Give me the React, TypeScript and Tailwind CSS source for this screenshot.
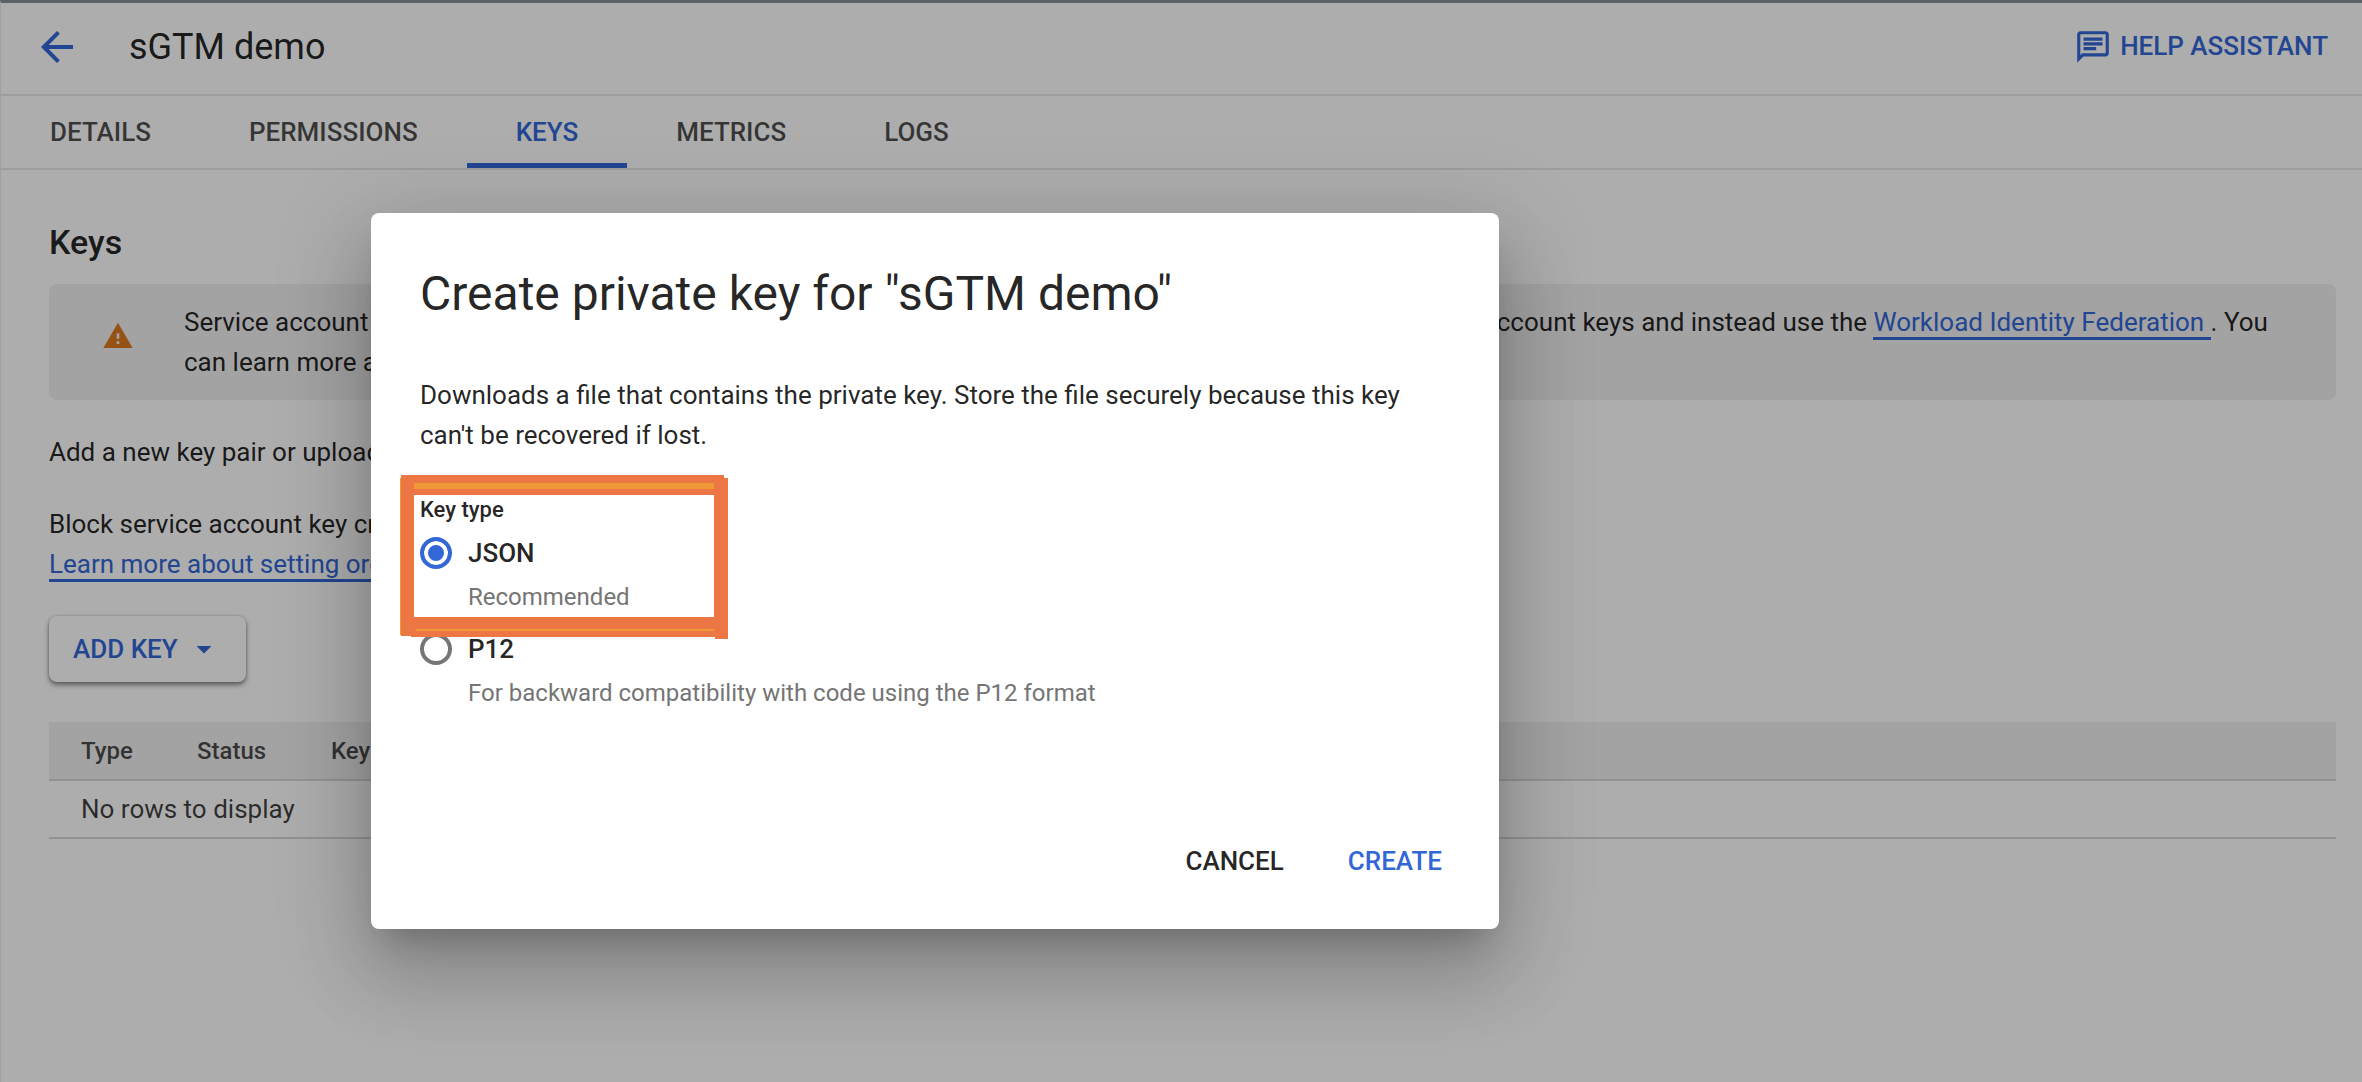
import React from "react";
import { clsx } from "clsx";
import { MdArrowBack, MdArrowDropDown, MdOutlineChat, MdWarning } from "react-icons/md";

const tabs = [
  { title: "DETAILS", href: "#details" },
  { title: "PERMISSIONS", href: "#permissions" },
  { title: "KEYS", href: "#keys", active: true },
  { title: "METRICS", href: "#metrics" },
  { title: "LOGS", href: "#logs" },
];

const keyTypes = [
  { id: "json", label: "JSON", hint: "Recommended" },
  {
    id: "p12",
    label: "P12",
    hint: "For backward compatibility with code using the P12 format",
  },
];

function Header() {
  return (
    <header className="flex h-[93px] items-center justify-between border-b-2 border-[#e6e6e6] pb-1 pl-8 pr-[34px]">
      <div className="flex items-center gap-12">
        <a href="#back" aria-label="Back" className="text-[#3367d6]">
          <MdArrowBack className="size-12" />
        </a>
        <h1 className="text-[36px] leading-10">sGTM demo</h1>
      </div>
      <button type="button" className="flex items-center gap-2 text-[26px] font-medium text-[#3367d6]">
        <MdOutlineChat className="size-[38px]" />
        HELP ASSISTANT
      </button>
    </header>
  );
}

function Tabs() {
  return (
    <nav className="flex h-[74px] border-b-2 border-[#e6e6e6]">
      {tabs.map((tab) => (
        <a
          key={tab.title}
          href={tab.href}
          className={clsx(
            "flex items-center border-b-[5px] px-[49px] pt-[6px] text-[26px] font-medium",
            tab.active ? "border-[#3367d6] text-[#3367d6]" : "border-transparent text-black/70"
          )}
        >
          {tab.title}
        </a>
      ))}
    </nav>
  );
}

function KeysPage() {
  return (
    <main className="flex flex-col pb-20 pl-12 pr-[26px] pt-[52px] text-[26px] leading-10">
      <h2 className="text-[34px] font-medium">Keys</h2>

      <div className="mt-[22px] flex gap-[50px] rounded-lg bg-[#f0f0f0] py-[18px] pl-[53px] pr-14">
        <MdWarning className="mt-[18px] size-8 shrink-0 text-[#dd7a20]" />
        <p>
          Service account keys could pose a security risk, if compromised. We recommend you avoid
          downloading service account keys and instead use the{" "}
          <a href="#federation" className="border-b-[3px] border-[#3367d6] text-[#3367d6]">
            Workload Identity Federation{" "}
          </a>
          . You can learn more about the best way to authenticate service accounts on Google Cloud here.
        </p>
      </div>

      <p className="mt-8">Add a new key pair or upload a public key certificate.</p>

      <p className="mt-8">
        Block service account key creation using policies.
        <br />
        <a href="#policies" className="border-b-[3px] border-[#3367d6] text-[#3367d6]">
          Learn more about setting organization policies
        </a>
      </p>

      <button
        type="button"
        className="mt-8 flex h-[66px] items-center gap-2 self-start rounded-lg px-6 font-medium text-[#3367d6] shadow-[0_3px_5px_rgba(0,0,0,0.45),0_0_3px_rgba(0,0,0,0.2)]"
      >
        ADD KEY
        <MdArrowDropDown className="size-9" />
      </button>

      <table className="mt-10 w-full text-left">
        <thead>
          <tr className="h-[58px] border-b-2 border-[#d8d8d8] bg-[#f0f0f0] text-2xl text-black/70">
            <th className="w-[116px] pl-8 font-medium">Type</th>
            <th className="w-[134px] pl-8 font-medium">Status</th>
            <th className="pl-8 font-medium">Key</th>
          </tr>
        </thead>
        <tbody>
          <tr className="h-[58px] border-b-2 border-[#d8d8d8] text-black/75">
            <td colSpan={3} className="pl-8">
              No rows to display
            </td>
          </tr>
        </tbody>
      </table>
    </main>
  );
}

// Hand-drawn style frame around the recommended option
function Highlight() {
  return (
    <svg
      viewBox="0 0 328 164"
      className="pointer-events-none absolute -left-5 -top-5 z-10 h-[164px] w-[328px]"
      fill="none"
      aria-hidden="true"
    >
      <path
        fill="#ec7744"
        fillRule="evenodd"
        d="M1 0h323v3h4v161h-13v-2H11v-1H1zM14 20v122h300V20z"
      />
      <path fill="#ef9936" d="M14 8h300v6H14zM16 154h298v2H16zM0 3h1v157H0z" />
    </svg>
  );
}

function CreateKeyDialog() {
  return (
    <div
      role="dialog"
      aria-labelledby="dialog-title"
      className="flex w-[1128px] flex-col rounded-lg bg-white px-[49px] pb-9 pt-12 text-[26px] leading-10 shadow-[0_22px_30px_-14px_rgba(0,0,0,0.2),0_48px_76px_6px_rgba(0,0,0,0.14),0_18px_92px_16px_rgba(0,0,0,0.12)]"
    >
      <h2 id="dialog-title" className="text-[48px] leading-[66px]">
        Create private key for "sGTM demo"
      </h2>
      <p className="mt-12">
        Downloads a file that contains the private key. Store the file securely because this key can't be
        recovered if lost.
      </p>

      <div className="relative mt-10">
        <Highlight />
        <fieldset>
          <legend className="text-[22px] font-medium leading-[30px]">Key type</legend>
          {keyTypes.map((type) => (
            <div key={type.id} className="flex h-24 flex-col pt-2">
              <div className="flex items-center gap-4">
                <input
                  type="radio"
                  id={type.id}
                  name="key-type"
                  defaultChecked={type.id === "json"}
                  className="size-8 appearance-none rounded-full border-4 border-[#757575] checked:border-[#3367d6] checked:bg-[#3367d6] checked:shadow-[inset_0_0_0_4px_white]"
                />
                <label htmlFor={type.id} className="font-medium">
                  {type.label}
                </label>
              </div>
              <p className="pl-12 pt-1 text-2xl leading-10 text-[#757575]">{type.hint}</p>
            </div>
          ))}
        </fieldset>
      </div>

      <div className="-mr-4 mt-28 flex justify-end gap-4 font-medium">
        <button type="button" className="h-16 px-6">
          CANCEL
        </button>
        <button type="button" className="h-16 px-6 text-[#3367d6]">
          CREATE
        </button>
      </div>
    </div>
  );
}

export default function App() {
  return (
    <div className="relative min-h-screen overflow-hidden border-l border-t-[3px] border-l-[#a0a0a0] border-t-[#5c6268] bg-white font-[Roboto,sans-serif] text-black/87">
      <Header />
      <Tabs />
      <KeysPage />
      <div className="absolute inset-0 flex items-start bg-black/32 pl-[370px] pt-[210px]">
        <CreateKeyDialog />
      </div>
    </div>
  );
}
